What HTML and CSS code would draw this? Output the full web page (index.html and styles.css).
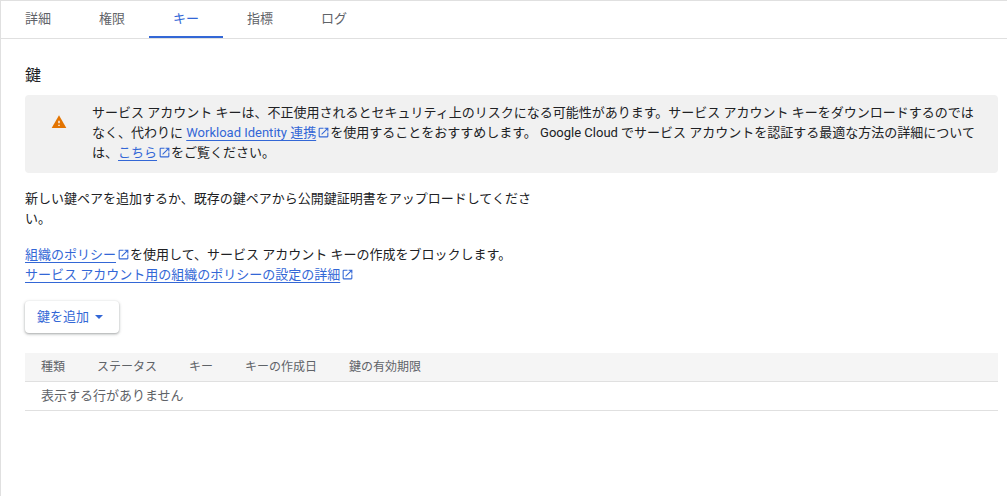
FILE: index.html
```html
<!DOCTYPE html>
<html lang="ja">
<head>
<meta charset="utf-8">
<title>鍵</title>
<link rel="stylesheet" href="styles.css">
</head>
<body>
<div class="page">
  <nav class="tabs">
    <a class="tab">詳細</a>
    <a class="tab">権限</a>
    <a class="tab active">キー</a>
    <a class="tab">指標</a>
    <a class="tab">ログ</a>
  </nav>
  <main class="content">
    <h1 class="title">鍵</h1>
    <div class="warning">
      <svg class="warn-icon" viewBox="0 0 24 24" width="16" height="16"><path fill="#e37400" d="M1 21h22L12 2 1 21z"/><path fill="#fff" d="M13 18h-2v-2h2v2zm0-4h-2v-4h2v4z"/></svg>
      <p class="warn-text">サービス アカウント キーは、不正使用されるとセキュリティ上のリスクになる可能性があります。サービス アカウント キーをダウンロードするのではなく、代わりに <a class="link">Workload Identity 連携</a><svg class="ext" viewBox="0 0 24 24"><path d="M19 19H5V5h7V3H5a2 2 0 0 0-2 2v14a2 2 0 0 0 2 2h14a2 2 0 0 0 2-2v-7h-2v7zM14 3v2h3.6l-9.8 9.8 1.4 1.4L19 6.4V10h2V3h-7z"/></svg>を使用することをおすすめします。 Google Cloud でサービス アカウントを認証する最適な方法の詳細については、<a class="link">こちら</a><svg class="ext" viewBox="0 0 24 24"><path d="M19 19H5V5h7V3H5a2 2 0 0 0-2 2v14a2 2 0 0 0 2 2h14a2 2 0 0 0 2-2v-7h-2v7zM14 3v2h3.6l-9.8 9.8 1.4 1.4L19 6.4V10h2V3h-7z"/></svg>をご覧ください。</p>
    </div>
    <p class="intro">新しい鍵ペアを追加するか、既存の鍵ペアから公開鍵証明書をアップロードしてください。</p>
    <p class="policy"><a class="link">組織のポリシー</a><svg class="ext" viewBox="0 0 24 24"><path d="M19 19H5V5h7V3H5a2 2 0 0 0-2 2v14a2 2 0 0 0 2 2h14a2 2 0 0 0 2-2v-7h-2v7zM14 3v2h3.6l-9.8 9.8 1.4 1.4L19 6.4V10h2V3h-7z"/></svg>を使用して、サービス アカウント キーの作成をブロックします。<br><a class="link">サービス アカウント用の組織のポリシーの設定の詳細</a><svg class="ext" viewBox="0 0 24 24"><path d="M19 19H5V5h7V3H5a2 2 0 0 0-2 2v14a2 2 0 0 0 2 2h14a2 2 0 0 0 2-2v-7h-2v7zM14 3v2h3.6l-9.8 9.8 1.4 1.4L19 6.4V10h2V3h-7z"/></svg></p>
    <button class="add-btn">鍵を追加<span class="caret"></span></button>
    <table class="keys">
      <thead>
        <tr><th>種類</th><th>ステータス</th><th>キー</th><th>キーの作成日</th><th>鍵の有効期限</th><th class="fill"></th></tr>
      </thead>
      <tbody>
        <tr><td colspan="6">表示する行がありません</td></tr>
      </tbody>
    </table>
  </main>
</div>
</body>
</html>
```
FILE: styles.css
```css
* { box-sizing: border-box; }
html, body { margin: 0; height: 100%; overflow: hidden; }
body {
  background: #fff;
  color: #202124;
  font-family: Roboto, "Noto Sans CJK JP", sans-serif;
  font-size: 13px;
  line-height: 20px;
}
.page {
  height: 496px;
  border-top: 1px solid #e0e0e0;
  border-left: 1px solid #e0e0e0;
}
.tabs {
  display: flex;
  height: 38px;
  border-bottom: 1px solid #e0e0e0;
}
.tab {
  width: 74px;
  height: 37px;
  padding-top: 8px;
  text-align: center;
  color: #5f6368;
}
.tab.active {
  color: #3367d6;
  border-bottom: 2px solid #3367d6;
}
.content { padding: 0 9px 0 24px; }
.title {
  margin: 26px 0 8px;
  font-size: 16px;
  font-weight: 400;
  line-height: 22px;
}
.warning {
  display: flex;
  height: 78px;
  padding: 8px 19px 0 0;
  background: #f1f1f1;
  border-radius: 4px;
}
.warn-icon { flex: none; margin: 11px 25px 0 26px; }
.warn-text { margin: 0; }
.link {
  color: #3367d6;
  text-decoration: underline;
  text-underline-offset: 3px;
}
.ext {
  width: 13px;
  height: 13px;
  margin: 0 0 0 1px;
  vertical-align: -2px;
  fill: #3367d6;
}
.intro { width: 510px; margin: 16px 0 0; }
.policy { margin: 16px 0 0; }
.add-btn {
  display: flex;
  align-items: center;
  height: 32px;
  margin-top: 16px;
  padding: 0 16px 0 12px;
  border: 0;
  border-radius: 4px;
  background: #fff;
  color: #3367d6;
  font: inherit;
  box-shadow: 0 1px 2px rgba(60,64,67,.3), 0 1px 3px 1px rgba(60,64,67,.15);
}
.caret {
  width: 0;
  height: 0;
  margin-left: 6px;
  border-left: 4px solid transparent;
  border-right: 4px solid transparent;
  border-top: 4px solid #3367d6;
}
.keys {
  width: 973px;
  margin-top: 20px;
  border-collapse: collapse;
  color: #5f6368;
}
.keys th {
  height: 28px;
  padding: 0 16px;
  background: #f5f5f5;
  border-bottom: 1px solid #e0e0e0;
  font-size: 12px;
  font-weight: 400;
  text-align: left;
  white-space: nowrap;
}
.keys th.fill { width: 100%; }
.keys td {
  height: 29px;
  padding: 0 16px;
  border-bottom: 1px solid #e0e0e0;
}
```
